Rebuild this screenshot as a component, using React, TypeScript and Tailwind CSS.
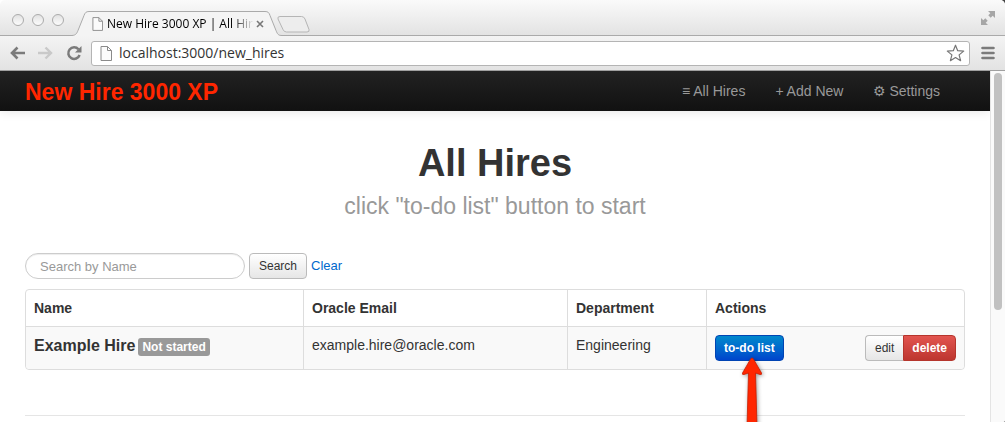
import React from "react";

const buttonBase =
  "h-[26px] cursor-pointer border text-xs leading-none whitespace-nowrap";

function PageIcon({ className }: { className: string }) {
  return (
    <svg viewBox="0 0 12 15" className={className} fill="#fbfbfb" stroke="#8a8a8a" aria-hidden="true">
      <path d="M1 .5h6.5l4 4v10H1zM7.5.5v4h4" />
    </svg>
  );
}

function TabStrip() {
  return (
    <div className="flex h-[35px] items-end bg-linear-to-b from-[#fafafa] to-[#e3e3e3]">
      <div className="flex gap-2 self-center pt-1 pl-3">
        {["Close", "Minimize", "Zoom"].map((label) => (
          <button
            key={label}
            aria-label={label}
            className="size-3 rounded-full border border-[#ababab] bg-linear-to-b from-[#e2e2e2] to-[#fcfcfc]"
          />
        ))}
      </div>
      <div className="relative z-10 -mb-px ml-2 flex h-[25px] w-[210px] items-center pr-4 pl-5">
        <svg
          viewBox="0 0 210 25"
          preserveAspectRatio="none"
          className="absolute inset-0 size-full"
          aria-hidden="true"
        >
          <path
            d="M0 24.5C4 24.3 5 22 6 19.500L12 4.500C13 1.800 14 .5 17 .5H193C196 .5 197 1.500 198 4.500L204 19.500C205.500 23 206 24.500 210 24.500V25H0Z"
            fill="#f4f4f4"
          />
          <path
            d="M0 24.5C4 24.3 5 22 6 19.500L12 4.500C13 1.800 14 .5 17 .5H193C196 .5 197 1.500 198 4.500L204 19.500C205.500 23 206 24.500 210 24.500"
            fill="none"
            stroke="#aaa"
          />
        </svg>
        <PageIcon className="relative h-[14px] w-[11px] shrink-0" />
        <span className="relative ml-1 min-w-0 flex-1 overflow-hidden mask-r-from-85% text-xs leading-4 whitespace-nowrap text-black">
          New Hire 3000 XP | All Hires
        </span>
        <button aria-label="Close tab" className="relative p-0.5">
          <svg viewBox="0 0 8 8" className="size-2" stroke="#777" strokeWidth="1.6" aria-hidden="true">
            <path d="M1 1l6 6M7 1L1 7" />
          </svg>
        </button>
      </div>
      <button aria-label="New tab" className="mb-0.5 -ml-[5px]">
        <svg viewBox="0 0 33 17" className="h-[17px] w-[33px]" fill="#ededed" stroke="#b5b5b5" aria-hidden="true">
          <path d="M3 .5H24.500Q27 .5 28 3L32 13.500Q32.700 16 30 16H9.500Q7 16 6 13.500L1 3Q.2.500 3 .5Z" />
        </svg>
      </button>
      <button aria-label="Full screen" className="mr-2.5 ml-auto self-center">
        <svg viewBox="0 0 14 14" className="size-[14px]" fill="#a6a6a6" aria-hidden="true">
          <path d="M7 0h7v7l-2.300-2.300L9.700 6.700 7.300 4.300l2-2zM7 14H0V7l2.300 2.300 2-2 2.400 2.400-2 2z" />
        </svg>
      </button>
    </div>
  );
}

function Toolbar() {
  return (
    <div className="flex h-9 items-center border-t border-b border-t-[#aaa] border-b-[#a0a0a0] bg-linear-to-b from-[#f4f4f4] to-[#e3e3e3] px-2.5">
      <button aria-label="Back">
        <svg viewBox="0 0 15 14" className="h-[14px] w-[15px]" fill="none" stroke="#7b7b7b" strokeWidth="2.6" aria-hidden="true">
          <path d="M7.500 1.500L2 7l5.500 5.500M2 7h13" />
        </svg>
      </button>
      <button aria-label="Forward" className="ml-[13px]">
        <svg viewBox="0 0 15 14" className="h-[14px] w-[15px]" fill="none" stroke="#c9c9c9" strokeWidth="2.400" aria-hidden="true">
          <path d="M7.500 1.500L13 7l-5.500 5.500M13 7H0" />
        </svg>
      </button>
      <button aria-label="Reload" className="ml-[13px]">
        <svg viewBox="0 0 16 16" className="size-4" aria-hidden="true">
          <path d="M12.500 4.300A5.800 5.800 0 1 0 13.600 10" fill="none" stroke="#7b7b7b" strokeWidth="2.500" />
          <path d="M15.500 1v6.500H9z" fill="#7b7b7b" />
        </svg>
      </button>
      <div className="ml-[9px] flex h-[25px] flex-1 items-center rounded-[3px] border border-[#b4b4b4] bg-white px-2">
        <PageIcon className="h-[15px] w-3 shrink-0" />
        <input
          aria-label="Address"
          defaultValue="localhost:3000/new_hires"
          className="ml-[7px] min-w-0 flex-1 bg-transparent font-['Open_Sans','Noto_Sans',sans-serif] text-sm leading-5 text-[#333] outline-none"
        />
        <button aria-label="Bookmark" className="-mr-1">
          <svg viewBox="0 0 19 18" className="h-[18px] w-[19px]" fill="#fff" stroke="#777" strokeWidth="1.200" strokeLinejoin="round" aria-hidden="true">
            <path d="M9.500 1.200L11.700 6.700L17.700 7.100L13.100 10.900L14.600 16.700L9.500 13.500L4.400 16.700L5.900 10.900L1.300 7.100L7.300 6.700Z" />
          </svg>
        </button>
      </div>
      <button aria-label="Menu" className="ml-[11px]">
        <svg viewBox="0 0 14 14" className="size-[14px]" stroke="#7b7b7b" strokeWidth="2.600" strokeLinecap="round" aria-hidden="true">
          <path d="M1.500 2h11M1.500 7h11M1.500 12h11" />
        </svg>
      </button>
    </div>
  );
}

function Navbar() {
  const links = [
    { glyph: "≡", text: "All Hires" },
    { glyph: "+", text: "Add New" },
    { glyph: "⚙", text: "Settings" },
  ];
  return (
    <header className="flex h-10 items-center justify-between bg-linear-to-b from-[#222] to-[#111] pr-[50px] pl-[25px] shadow-[0_1px_10px_rgba(0,0,0,0.1)]">
      <a href="#" className="pt-0.5 text-[23px] leading-10 font-bold whitespace-nowrap text-[#ff2600]">
        New Hire 3000 XP
      </a>
      <nav className="flex gap-[30px] text-sm leading-5 text-[#999]">
        {links.map(({ glyph, text }) => (
          <a key={text} href="#" className="flex items-center gap-[3px] whitespace-nowrap">
            <span className="text-sm">{glyph}</span>
            {text}
          </a>
        ))}
      </nav>
    </header>
  );
}

function Arrow() {
  return (
    <svg
      viewBox="0 0 24 80"
      className="pointer-events-none absolute top-[22px] left-[25px] z-10 h-20 w-6 drop-shadow-[1px_1px_2px_rgba(0,0,0,0.4)]"
      aria-hidden="true"
    >
      <path d="M12 1Q13 1 14 3L21.500 16Q22 18 20 17.500L15.500 16L17.300 80H6.700L8.500 16L4 17.500Q2 18 2.500 16L10 3Q11 1 12 1Z" fill="#ff2600" stroke="#c81e00" strokeWidth=".8" />
    </svg>
  );
}

function HiresTable() {
  const cell = "border-l border-[#ddd] p-2 text-left align-top leading-5 first:border-l-0";
  return (
    <div className="mt-2.5 rounded border border-[#ddd]">
      <table className="w-full table-fixed border-separate border-spacing-0 text-sm text-[#333]">
        <colgroup>
          <col className="w-[277px]" />
          <col className="w-[264px]" />
          <col className="w-[139px]" />
          <col />
        </colgroup>
        <thead>
          <tr>
            {["Name", "Oracle Email", "Department", "Actions"].map((title) => (
              <th key={title} scope="col" className={cell + " font-bold"}>
                {title}
              </th>
            ))}
          </tr>
        </thead>
        <tbody className="bg-[#f9f9f9]">
          <tr>
            <td className={cell + " border-t rounded-bl"}>
              <div className="flex items-center gap-[3px] whitespace-nowrap">
                <strong className="text-base leading-5">Example Hire</strong>
                <span className="mt-[3px] rounded-[3px] bg-[#999] px-1 text-xs leading-[18px] font-bold text-white">
                  Not started
                </span>
              </div>
            </td>
            <td className={cell + " border-t"}>example.hire@oracle.com</td>
            <td className={cell + " border-t"}>Engineering</td>
            <td className={cell + " border-t rounded-br"}>
              <div className="flex justify-between">
                <div className="relative flex">
                  <button
                    className={
                      buttonBase +
                      " rounded border-[#0044b3] bg-linear-to-b from-[#0088cc] to-[#0044cc] px-2 font-bold text-white"
                    }
                  >
                    to-do list
                  </button>
                  <Arrow />
                </div>
                <div className="flex">
                  <button
                    className={
                      buttonBase +
                      " rounded-l border-r-0 border-[#bbb] bg-linear-to-b from-white to-[#e6e6e6] px-[9px] text-[#333]"
                    }
                  >
                    edit
                  </button>
                  <button
                    className={
                      buttonBase +
                      " rounded-r border-[#b5352c] bg-linear-to-b from-[#e2544f] to-[#bd362f] px-2 font-bold text-white"
                    }
                  >
                    delete
                  </button>
                </div>
              </div>
            </td>
          </tr>
        </tbody>
      </table>
    </div>
  );
}

export default function App() {
  return (
    <div className="h-screen bg-linear-to-r from-white to-[#444] font-['Liberation_Sans',Arial,sans-serif]">
      <div className="flex h-full flex-col overflow-hidden rounded-t-[5px] rounded-b-[2px] bg-white">
        <div className="font-['Open_Sans','Noto_Sans',sans-serif]">
          <TabStrip />
          <Toolbar />
        </div>
        <div className="flex min-h-0 flex-1">
          <div className="min-w-0 flex-1 overflow-hidden">
            <Navbar />
            <main className="px-[25px] pt-8">
              <div className="text-center">
                <h1 className="text-[38px] leading-10 font-bold text-[#333]">All Hires</h1>
                <p className="mt-[3px] text-[23px] leading-10 text-[#999]">
                  click "to-do list" button to start
                </p>
              </div>
              <form className="mt-[27px] flex items-center gap-1" onSubmit={(e) => e.preventDefault()}>
                <input
                  type="search"
                  aria-label="Search by Name"
                  placeholder="Search by Name"
                  className="h-[26px] w-[220px] rounded-full border border-[#ccc] bg-white px-3.5 text-[13px] leading-5 text-[#555] shadow-[inset_0_1px_1px_rgba(0,0,0,0.075)] outline-none placeholder:text-[#999]"
                />
                <button
                  type="submit"
                  className={
                    buttonBase +
                    " rounded border-[#bbb] bg-linear-to-b from-white to-[#e6e6e6] px-[9px] text-[#333]"
                  }
                >
                  Search
                </button>
                <a href="#" className="text-[13px] leading-5 text-[#0069cc]">
                  Clear
                </a>
              </form>
              <HiresTable />
              <hr className="mt-[45px] border-[#e5e5e5]" />
            </main>
          </div>
          <div className="w-[15px] border-l border-[#e4e4e4] bg-[#fafafa] px-[3px] pt-0.5">
            <div className="h-[237px] rounded-full bg-[#c1c1c1]" />
          </div>
        </div>
      </div>
    </div>
  );
}
